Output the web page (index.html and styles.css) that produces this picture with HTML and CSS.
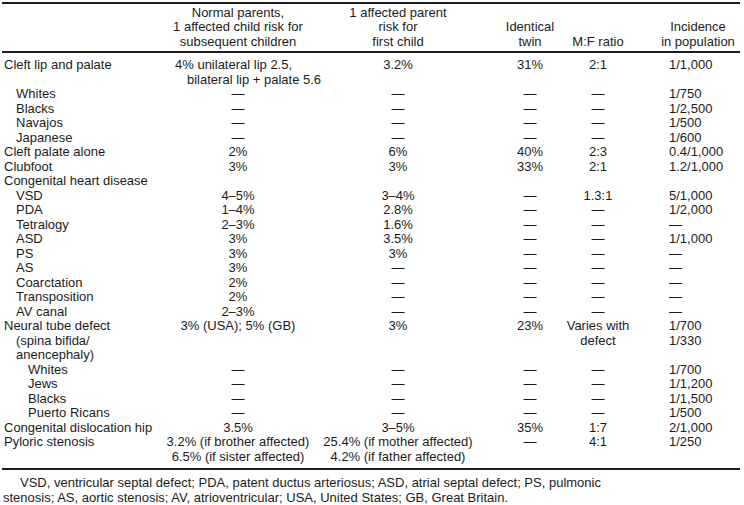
FILE: index.html
```html
<!DOCTYPE html>
<html lang="en">
<head>
<meta charset="utf-8">
<title>Recurrence risks of common congenital malformations</title>
<link rel="stylesheet" href="styles.css">
</head>
<body>
<div class="page">
<table class="risk">
  <colgroup>
    <col class="c0"><col class="c1"><col class="c2"><col class="c3"><col class="c4"><col class="c5">
  </colgroup>
  <thead>
    <tr>
      <th class="lbl"></th>
      <th>Normal parents,<br>1 affected child risk for<br>subsequent children</th>
      <th>1 affected parent<br>risk for<br>first child</th>
      <th class="twin">Identical<br>twin</th>
      <th>M:F ratio</th>
      <th class="inc">Incidence<br>in population</th>
    </tr>
  </thead>
  <tbody>
    <tr class="first">
      <td class="lbl">Cleft lip and palate</td>
      <td class="hang">4% unilateral lip 2.5,<br>bilateral lip + palate 5.6</td>
      <td>3.2%</td><td class="twin">31%</td><td>2:1</td><td class="inc">1/1,000</td>
    </tr>
    <tr><td class="lbl l1">Whites</td><td>—</td><td>—</td><td class="twin">—</td><td>—</td><td class="inc">1/750</td></tr>
    <tr><td class="lbl l1">Blacks</td><td>—</td><td>—</td><td class="twin">—</td><td>—</td><td class="inc">1/2,500</td></tr>
    <tr><td class="lbl l1">Navajos</td><td>—</td><td>—</td><td class="twin">—</td><td>—</td><td class="inc">1/500</td></tr>
    <tr><td class="lbl l1">Japanese</td><td>—</td><td>—</td><td class="twin">—</td><td>—</td><td class="inc">1/600</td></tr>
    <tr><td class="lbl">Cleft palate alone</td><td>2%</td><td>6%</td><td class="twin">40%</td><td>2:3</td><td class="inc">0.4/1,000</td></tr>
    <tr><td class="lbl">Clubfoot</td><td>3%</td><td>3%</td><td class="twin">33%</td><td>2:1</td><td class="inc">1.2/1,000</td></tr>
    <tr><td class="lbl">Congenital heart disease</td><td></td><td></td><td class="twin"></td><td></td><td class="inc"></td></tr>
    <tr><td class="lbl l1">VSD</td><td>4–5%</td><td>3–4%</td><td class="twin">—</td><td>1.3:1</td><td class="inc">5/1,000</td></tr>
    <tr><td class="lbl l1">PDA</td><td>1–4%</td><td>2.8%</td><td class="twin">—</td><td>—</td><td class="inc">1/2,000</td></tr>
    <tr><td class="lbl l1">Tetralogy</td><td>2–3%</td><td>1.6%</td><td class="twin">—</td><td>—</td><td class="inc">—</td></tr>
    <tr><td class="lbl l1">ASD</td><td>3%</td><td>3.5%</td><td class="twin">—</td><td>—</td><td class="inc">1/1,000</td></tr>
    <tr><td class="lbl l1">PS</td><td>3%</td><td>3%</td><td class="twin">—</td><td>—</td><td class="inc">—</td></tr>
    <tr><td class="lbl l1">AS</td><td>3%</td><td>—</td><td class="twin">—</td><td>—</td><td class="inc">—</td></tr>
    <tr><td class="lbl l1">Coarctation</td><td>2%</td><td>—</td><td class="twin">—</td><td>—</td><td class="inc">—</td></tr>
    <tr><td class="lbl l1">Transposition</td><td>2%</td><td>—</td><td class="twin">—</td><td>—</td><td class="inc">—</td></tr>
    <tr><td class="lbl l1">AV canal</td><td>2–3%</td><td>—</td><td class="twin">—</td><td>—</td><td class="inc">—</td></tr>
    <tr>
      <td class="lbl">Neural tube defect<br><span class="sub">(spina bifida/</span><br><span class="sub">anencephaly)</span></td>
      <td>3% (USA); 5% (GB)</td><td>3%</td><td class="twin">23%</td><td>Varies with<br>defect</td><td class="inc">1/700<br>1/330</td>
    </tr>
    <tr><td class="lbl l2">Whites</td><td>—</td><td>—</td><td class="twin">—</td><td>—</td><td class="inc">1/700</td></tr>
    <tr><td class="lbl l2">Jews</td><td>—</td><td>—</td><td class="twin">—</td><td>—</td><td class="inc">1/1,200</td></tr>
    <tr><td class="lbl l2">Blacks</td><td>—</td><td>—</td><td class="twin">—</td><td>—</td><td class="inc">1/1,500</td></tr>
    <tr><td class="lbl l2">Puerto Ricans</td><td>—</td><td>—</td><td class="twin">—</td><td>—</td><td class="inc">1/500</td></tr>
    <tr><td class="lbl">Congenital dislocation hip</td><td>3.5%</td><td>3–5%</td><td class="twin">35%</td><td>1:7</td><td class="inc">2/1,000</td></tr>
    <tr class="last">
      <td class="lbl">Pyloric stenosis</td>
      <td>3.2% (if brother affected)<br>6.5% (if sister affected)</td>
      <td>25.4% (if mother affected)<br>4.2% (if father affected)</td>
      <td class="twin">—</td><td>4:1</td><td class="inc">1/250</td>
    </tr>
  </tbody>
</table>
<p class="note">VSD, ventricular septal defect; PDA, patent ductus arteriosus; ASD, atrial septal defect; PS, pulmonic<br>stenosis; AS, aortic stenosis; AV, atrioventricular; USA, United States; GB, Great Britain.</p>
</div>
</body>
</html>
```

FILE: styles.css
```css
html, body {
  margin: 0;
  padding: 0;
  background: #ffffff;
}

body {
  font-family: "Liberation Sans", Arial, Helvetica, sans-serif;
  font-size: 13px;
  line-height: 14.5px;
  color: #1b1b1b;
}

.page {
  padding: 2px 0 0 2px;
}

.risk {
  border-collapse: collapse;
  table-layout: fixed;
  width: 738px;
}

.c0 { width: 163px; }
.c1 { width: 146px; }
.c2 { width: 174px; }
.c3 { width: 81px; }
.c4 { width: 64px; }
.c5 { width: 110px; }

.risk th,
.risk td {
  padding: 0;
  text-align: center;
  vertical-align: top;
  white-space: nowrap;
}

.risk th {
  font-weight: normal;
  vertical-align: bottom;
  padding-top: 1.5px;
  padding-bottom: 2px;
  border-top: 2px solid #1b1b1b;
  border-bottom: 2px solid #1b1b1b;
}

.risk .lbl {
  text-align: left;
  padding-left: 2px;
}

.risk .lbl.l1 { padding-left: 14px; }
.risk .lbl.l2 { padding-left: 26px; }

.risk .lbl .sub {
  padding-left: 12px;
}

.risk .twin { padding-left: 9px; }

.risk th.inc { padding-left: 26px; }
.risk td.inc {
  text-align: left;
  padding-left: 39px;
}

.risk td.hang {
  text-align: left;
  padding-left: 22px;
  text-indent: -12px;
}

.risk tr.first td { padding-top: 5px; }

.risk tr.last td {
  padding-bottom: 4px;
  border-bottom: 2px solid #1b1b1b;
}

.note {
  margin: 6px 0 0 1px;
  text-indent: 17px;
  white-space: nowrap;
}
```
